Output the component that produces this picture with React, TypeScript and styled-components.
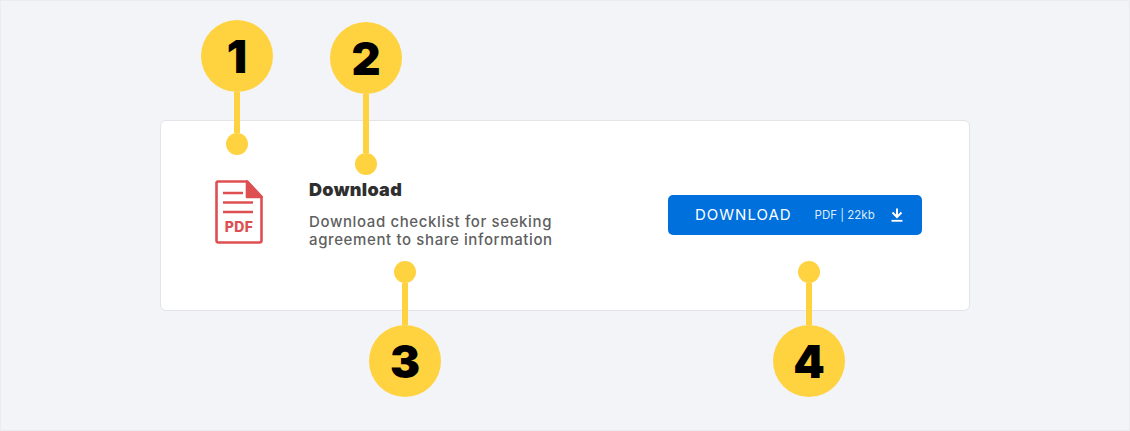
import { createGlobalStyle, styled } from 'styled-components'

const pins = [
  { label: '1', left: 201, top: 20, stem: 41, flip: false },
  { label: '2', left: 330, top: 22, stem: 59, flip: false },
  { label: '3', left: 369, top: 261, stem: 42, flip: true },
  { label: '4', left: 773, top: 261, stem: 42, flip: true },
]

const PdfIcon = () => (
  <FileSvg viewBox="0 0 48 65" width="48" height="65" aria-hidden="true">
    <path d="M2.500 1.500H32L46.500 17V60.500a2 2 0 0 1-2 2H3.500a2 2 0 0 1-2-2V2.500z" fill="none" stroke="#de4f51" strokeWidth="2.600" strokeLinejoin="round" />
    <path d="M32 1.500L46.500 17H32z" fill="#de4f51" stroke="#de4f51" strokeWidth="2.600" strokeLinejoin="round" />
    <path d="M8 13h20M8 22.500h30M8 32h30" stroke="#de4f51" strokeWidth="2.600" />
    <text x="24" y="52" textAnchor="middle" fontFamily="Inter, sans-serif" fontWeight="800" fontSize="14" letterSpacing="0.4" fill="#de4f51">PDF</text>
  </FileSvg>
)

const DownloadIcon = () => (
  <svg viewBox="0 0 12 14" width="12" height="14" aria-hidden="true">
    <path d="M6 0.500V8.500M1.500 4.500L6 9l4.500-4.500" fill="none" stroke="#fff" strokeWidth="2" />
    <path d="M0.500 12.800h11" stroke="#fff" strokeWidth="1.800" />
  </svg>
)

export default function App() {
  return (
    <>
      <GlobalStyle />
      <Frame>
        <Card>
          <PdfIcon />
          <Copy>
            <Title>Download</Title>
            <Description>
              Download checklist for seeking
              <br />
              agreement to share information
            </Description>
          </Copy>
          <Button type="button">
            <ButtonLabel>DOWNLOAD</ButtonLabel>
            <FileMeta>PDF | 22kb</FileMeta>
            <DownloadIcon />
          </Button>
        </Card>
        {pins.map((pin) => (
          <Pin key={pin.label} $left={pin.left} $top={pin.top} $flip={pin.flip}>
            <Badge>{pin.label}</Badge>
            <Stem $length={pin.stem} />
            <Dot />
          </Pin>
        ))}
      </Frame>
    </>
  )
}

const GlobalStyle = createGlobalStyle`
  body {
    margin: 0;
    font-family: Inter, "Liberation Sans", sans-serif;
  }
`

const Frame = styled.div`
  position: relative;
  box-sizing: border-box;
  display: flex;
  align-items: center;
  justify-content: center;
  width: 1130px;
  height: 431px;
  border: 1px solid #eaecf1;
  background: #f2f4f8;
`

const Card = styled.div`
  box-sizing: border-box;
  display: flex;
  align-items: center;
  width: 810px;
  height: 191px;
  padding: 0 47px 0 54px;
  border: 1px solid #e2e4e8;
  border-radius: 6px;
  background: #fff;
`

const FileSvg = styled.svg`
  display: block;
  flex: none;
  margin-top: -6px;
`

const Copy = styled.div`
  flex: 1;
  margin-left: 46px;
  margin-top: -3px;
`

const Title = styled.h2`
  margin: 0 0 13px;
  font-size: 18px;
  font-weight: 900;
  line-height: 20px;
  letter-spacing: 0.3px;
  color: #2f2f2f;
`

const Description = styled.p`
  margin: 0;
  font-size: 15px;
  font-weight: 500;
  line-height: 18px;
  letter-spacing: 0.62px;
  color: #5f5f5f;
`

const Button = styled.button`
  box-sizing: border-box;
  display: flex;
  align-items: center;
  width: 254px;
  height: 40px;
  margin-top: -2px;
  padding: 0 19px 0 27px;
  border: 0;
  border-radius: 5px;
  background: #0070dc;
  color: #fff;
  font-family: inherit;
`

const ButtonLabel = styled.span`
  font-size: 15px;
  font-weight: 400;
  letter-spacing: 1px;
`

const FileMeta = styled.span`
  margin: 0 auto 0 23px;
  font-size: 11.5px;
  color: #dcebfb;
`

const Pin = styled.div<{ $left: number; $top: number; $flip: boolean }>`
  position: absolute;
  left: ${(p) => p.$left - 1}px;
  top: ${(p) => p.$top - 1}px;
  display: flex;
  flex-direction: ${(p) => (p.$flip ? 'column-reverse' : 'column')};
  align-items: center;
  width: 72px;
`

const Badge = styled.div`
  display: flex;
  align-items: center;
  justify-content: center;
  width: 72px;
  height: 72px;
  border-radius: 50%;
  background: #ffd240;
  color: #000;
  font-size: 45px;
  font-weight: 900;
  line-height: 1;
`

const Stem = styled.div<{ $length: number }>`
  width: 6px;
  height: ${(p) => p.$length}px;
  background: #ffd240;
`

const Dot = styled.div`
  width: 22px;
  height: 22px;
  border-radius: 50%;
  background: #ffd240;
`
